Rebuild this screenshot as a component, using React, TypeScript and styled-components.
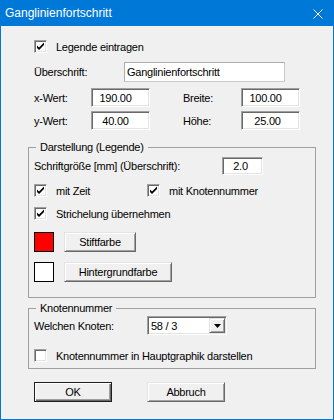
import React from "react";
import styled, { createGlobalStyle, css } from "styled-components";

const GlobalStyle = createGlobalStyle`
  html, body {
    margin: 0;
    padding: 0;
    background: #ffffff;
  }
`;

const Window = styled.div`
  width: 334px;
  height: 420px;
  box-sizing: border-box;
  border: 1px solid #0078d7;
  border-top: 0;
  background: #f0f0f0;
  display: flex;
  flex-direction: column;
  font-family: "Liberation Sans", Arial, sans-serif;
  font-size: 11px;
  letter-spacing: -0.25px;
  color: #000;
`;

const TitleBar = styled.div`
  height: 26px;
  flex: none;
  background: #0078d7;
  color: #fff;
  display: flex;
  align-items: center;
  justify-content: space-between;
  padding: 0 10px 0 4px;
  font-size: 12px;
  letter-spacing: 0;
`;

const CloseIcon = styled.svg`
  display: block;
  margin-top: 2px;
`;

const Body = styled.div`
  flex: 1;
  display: flex;
  flex-direction: column;
  padding-left: 27px;
`;

const Inset = styled.div`
  display: flex;
  flex-direction: column;
  padding-left: 6px;
`;

const Row = styled.div<{ $top: number; $h: number }>`
  display: flex;
  align-items: center;
  margin-top: ${(p) => p.$top}px;
  height: ${(p) => p.$h}px;
`;

const Label = styled.span<{ $w?: number }>`
  display: inline-block;
  white-space: nowrap;
  ${(p) => p.$w !== undefined && css`width: ${p.$w}px; flex: none;`}
`;

const sunken = css`
  box-sizing: border-box;
  background: #fff;
  border-style: solid;
  border-width: 1px;
  border-color: #a0a0a0 #fff #fff #a0a0a0;
  box-shadow: inset 1px 1px 0 #696969, inset -1px -1px 0 #e3e3e3;
`;

const Field = styled.div<{ $w: number; $h: number; $flat?: boolean; $pr?: number }>`
  ${sunken};
  width: ${(p) => p.$w}px;
  height: ${(p) => p.$h}px;
  flex: none;
  display: flex;
  align-items: center;
  justify-content: center;
  padding-right: ${(p) => p.$pr ?? 0}px;
  white-space: nowrap;
  ${(p) =>
    p.$flat &&
    css`
      justify-content: flex-start;
      padding: 0 0 0 2px;
      border-color: #acacac #c9c9c9 #c9c9c9 #acacac;
      box-shadow: none;
    `}
`;

const Box = styled.span`
  ${sunken};
  width: 13px;
  height: 13px;
  flex: none;
  display: inline-flex;
  align-items: center;
  justify-content: center;
  margin-right: 9px;
`;

const CheckCell = styled.div<{ $w?: number }>`
  display: flex;
  align-items: center;
  ${(p) => p.$w !== undefined && css`width: ${p.$w}px; flex: none;`}
`;

const Group = styled.fieldset<{ $top: number; $pb: number }>`
  box-sizing: border-box;
  width: 288px;
  margin: ${(p) => p.$top}px 0 0 0;
  padding: 0 0 ${(p) => p.$pb}px 5px;
  min-width: 0;
  border: 1px solid #a0a0a0;
  display: flex;
  flex-direction: column;
`;

const Legend = styled.legend`
  line-height: 13px;
  height: 13px;
  padding: 0 4px;
  margin-left: 2px;
`;

const Swatch = styled.span<{ $color: string }>`
  box-sizing: border-box;
  width: 20px;
  height: 20px;
  flex: none;
  background: ${(p) => p.$color};
  border: 1px solid #000;
  margin-right: 10px;
`;

const Button = styled.button<{ $w: number; $default?: boolean }>`
  box-sizing: border-box;
  width: ${(p) => p.$w}px;
  height: 20px;
  flex: none;
  padding: 0;
  margin: 0;
  font: inherit;
  letter-spacing: inherit;
  color: #000;
  background: #f0f0f0;
  border-style: solid;
  border-width: 1px;
  border-color: #e3e3e3 #696969 #696969 #e3e3e3;
  box-shadow: inset 1px 1px 0 #fff, inset -1px -1px 0 #a0a0a0;
  ${(p) =>
    p.$default &&
    css`
      border-color: #1e1e1e;
      box-shadow: inset 1px 1px 0 #fff, inset -1px -1px 0 #696969,
        inset -2px -2px 0 #a0a0a0;
    `}
`;

const Combo = styled.div`
  ${sunken};
  width: 80px;
  height: 19px;
  flex: none;
  display: flex;
  align-items: center;
  justify-content: space-between;
  padding: 0 1px 0 3px;
`;

const DropButton = styled.span`
  box-sizing: border-box;
  width: 16px;
  height: 15px;
  background: #f0f0f0;
  border-style: solid;
  border-width: 1px;
  border-color: #e3e3e3 #696969 #696969 #e3e3e3;
  box-shadow: inset 1px 1px 0 #fff, inset -1px -1px 0 #a0a0a0;
  display: flex;
  align-items: center;
  justify-content: center;
`;

const ButtonBar = styled.div`
  display: flex;
  gap: 35px;
  margin-top: 13px;
  padding-left: 6px;
`;

const Check = ({ checked }: { checked: boolean }) => (
  <Box>
    {checked && (
      <svg width="9" height="9" viewBox="0 0 9 9">
        <path d="M1 3.5 L3 5.5 L8 0.5 L8 3 L3 8 L1 6 Z" fill="#000" />
      </svg>
    )}
  </Box>
);

const App = () => {
  return (
    <>
      <GlobalStyle />
      <Window>
        <TitleBar>
          <span>Ganglinienfortschritt</span>
          <CloseIcon width="10" height="10" viewBox="0 0 10 10">
            <path d="M0.5 0.5 L9.5 9.5 M9.5 0.5 L0.5 9.5" stroke="#fff" strokeWidth="1" />
          </CloseIcon>
        </TitleBar>
        <Body>
          <Inset>
            <Row $top={14} $h={13}>
              <CheckCell>
                <Check checked />
                <Label>Legende eintragen</Label>
              </CheckCell>
            </Row>
            <Row $top={9} $h={20}>
              <Label $w={90}>Überschrift:</Label>
              <Field $w={161} $h={20} $flat>
                Ganglinienfortschritt
              </Field>
            </Row>
            <Row $top={6} $h={19}>
              <Label $w={57}>x-Wert:</Label>
              <Field $w={59} $h={19} $pr={10}>
                190.00
              </Field>
              <Label $w={58} style={{ marginLeft: 33 }}>
                Breite:
              </Label>
              <Field $w={59} $h={19} $pr={10}>
                100.00
              </Field>
            </Row>
            <Row $top={4} $h={19}>
              <Label $w={57}>y-Wert:</Label>
              <Field $w={59} $h={19} $pr={10}>
                40.00
              </Field>
              <Label $w={58} style={{ marginLeft: 33 }}>
                Höhe:
              </Label>
              <Field $w={59} $h={19} $pr={6}>
                25.00
              </Field>
            </Row>
          </Inset>

          <Group $top={11} $pb={15}>
            <Legend>Darstellung (Legende)</Legend>
            <Row $top={3} $h={18}>
              <Label $w={188}>Schriftgröße [mm] (Überschrift):</Label>
              <Field $w={41} $h={18} $pr={4}>
                2.0
              </Field>
            </Row>
            <Row $top={9} $h={13}>
              <CheckCell $w={113}>
                <Check checked />
                <Label>mit Zeit</Label>
              </CheckCell>
              <CheckCell>
                <Check checked />
                <Label>mit Knotennummer</Label>
              </CheckCell>
            </Row>
            <Row $top={10} $h={13}>
              <CheckCell>
                <Check checked />
                <Label>Strichelung übernehmen</Label>
              </CheckCell>
            </Row>
            <Row $top={12} $h={20}>
              <Swatch $color="#ff0000" />
              <Button $w={72}>Stiftfarbe</Button>
            </Row>
            <Row $top={10} $h={20}>
              <Swatch $color="#ffffff" />
              <Button $w={108}>Hintergrundfarbe</Button>
            </Row>
          </Group>

          <Group $top={4} $pb={6}>
            <Legend>Knotennummer</Legend>
            <Row $top={1} $h={19}>
              <Label $w={113}>Welchen Knoten:</Label>
              <Combo>
                <span>58 / 3</span>
                <DropButton>
                  <svg width="7" height="4" viewBox="0 0 7 4">
                    <path d="M0 0 H7 L3.5 4 Z" fill="#000" />
                  </svg>
                </DropButton>
              </Combo>
            </Row>
            <Row $top={14} $h={13}>
              <CheckCell>
                <Check checked={false} />
                <Label>Knotennummer in Hauptgraphik darstellen</Label>
              </CheckCell>
            </Row>
          </Group>

          <ButtonBar>
            <Button $w={78} $default>
              OK
            </Button>
            <Button $w={78}>Abbruch</Button>
          </ButtonBar>
        </Body>
      </Window>
    </>
  );
};

export default App;
